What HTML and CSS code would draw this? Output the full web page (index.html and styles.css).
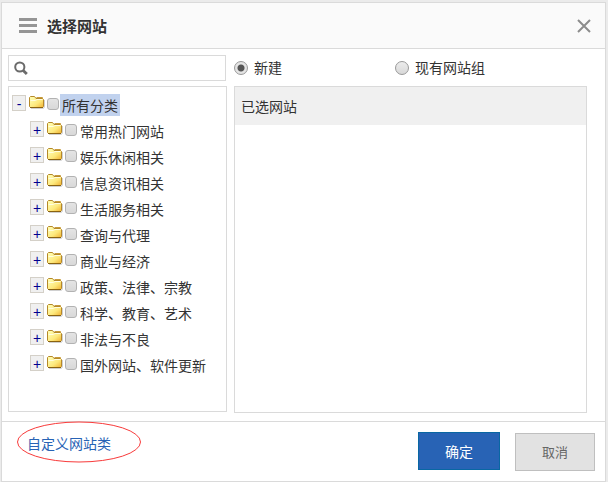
FILE: index.html
```html
<!DOCTYPE html>
<html lang="zh-CN">
<head>
<meta charset="utf-8">
<title>选择网站</title>
<link rel="stylesheet" href="styles.css">
</head>
<body>
<svg class="defs" aria-hidden="true">
  <defs>
    <linearGradient id="folder-fill" x1="0" y1="0" x2="1" y2="1">
      <stop offset="0.2" stop-color="#fffaa8"/>
      <stop offset="0.6" stop-color="#fde87c"/>
      <stop offset="1" stop-color="#f0b030"/>
    </linearGradient>
    <symbol id="folder" viewBox="0 0 16 15">
      <path d="M2 13.500H13.500Q15.500 13.500 15.500 11.500V5" fill="none" stroke="#777" stroke-opacity=".35"/>
      <path d="M.5 11.500V2.500L1.500 1.500H5.500L7 3.500H13.500L14.500 4.500V11.500L13.500 12.500H1.500Z" fill="url(#folder-fill)" stroke="#b5892a"/>
      <path d="M7.500 2.500H13.500V4" fill="none" stroke="#c79a3a"/>
      <path d="M1.500 5.500H6.500L8 4.500H13.500" fill="none" stroke="#fffde0"/>
      <path d="M1 12.500H14" fill="none" stroke="#8a6210"/>
    </symbol>
  </defs>
</svg>
<section class="dialog" role="dialog" aria-labelledby="title">
  <header class="dialog-header">
    <svg class="menu-icon" width="18" height="15" viewBox="0 0 18 15" aria-hidden="true"><path d="M0 0h18v3H0zM0 6h18v3H0zM0 12h18v3H0z" fill="#959595"/></svg>
    <h1 id="title">选择网站</h1>
    <button class="close" type="button" aria-label="关闭"><svg width="14" height="14" viewBox="0 0 14 14"><path d="M1 1l12 12M13 1l-12 12" stroke="#8c8c8c" stroke-width="2"/></svg></button>
  </header>

  <main class="content">
    <div class="source">
      <div class="search">
        <svg width="14" height="14" viewBox="0 0 14 14" aria-hidden="true"><circle cx="5.800" cy="6" r="4.600" fill="none" stroke="#6b6b6b" stroke-width="2"/><path d="M9 9.200l3.800 3.800" stroke="#6b6b6b" stroke-width="2.800"/></svg>
        <input type="text" aria-label="搜索网站">
      </div>
      <ul class="tree">
        <li>
          <div class="node"><button class="toggle" type="button">-</button><svg class="folder"><use href="#folder"/></svg><input type="checkbox" id="all"><label class="selected" for="all">所有分类</label></div>
          <ul>
            <li class="node"><button class="toggle" type="button">+</button><svg class="folder"><use href="#folder"/></svg><input type="checkbox" id="c1"><label for="c1">常用热门网站</label></li>
            <li class="node"><button class="toggle" type="button">+</button><svg class="folder"><use href="#folder"/></svg><input type="checkbox" id="c2"><label for="c2">娱乐休闲相关</label></li>
            <li class="node"><button class="toggle" type="button">+</button><svg class="folder"><use href="#folder"/></svg><input type="checkbox" id="c3"><label for="c3">信息资讯相关</label></li>
            <li class="node"><button class="toggle" type="button">+</button><svg class="folder"><use href="#folder"/></svg><input type="checkbox" id="c4"><label for="c4">生活服务相关</label></li>
            <li class="node"><button class="toggle" type="button">+</button><svg class="folder"><use href="#folder"/></svg><input type="checkbox" id="c5"><label for="c5">查询与代理</label></li>
            <li class="node"><button class="toggle" type="button">+</button><svg class="folder"><use href="#folder"/></svg><input type="checkbox" id="c6"><label for="c6">商业与经济</label></li>
            <li class="node"><button class="toggle" type="button">+</button><svg class="folder"><use href="#folder"/></svg><input type="checkbox" id="c7"><label for="c7">政策、法律、宗教</label></li>
            <li class="node"><button class="toggle" type="button">+</button><svg class="folder"><use href="#folder"/></svg><input type="checkbox" id="c8"><label for="c8">科学、教育、艺术</label></li>
            <li class="node"><button class="toggle" type="button">+</button><svg class="folder"><use href="#folder"/></svg><input type="checkbox" id="c9"><label for="c9">非法与不良</label></li>
            <li class="node"><button class="toggle" type="button">+</button><svg class="folder"><use href="#folder"/></svg><input type="checkbox" id="c10"><label for="c10">国外网站、软件更新</label></li>
          </ul>
        </li>
      </ul>
    </div>
    <div class="target">
      <div class="modes">
        <div class="mode"><input type="radio" name="mode" id="new" checked><label for="new">新建</label></div>
        <div class="mode"><input type="radio" name="mode" id="existing"><label for="existing">现有网站组</label></div>
      </div>
      <section class="chosen"><h2>已选网站</h2></section>
    </div>
  </main>

  <footer class="dialog-footer">
    <a class="custom" href="#">自定义网站类<svg class="ring" width="124" height="42" viewBox="0 0 124 42" aria-hidden="true"><ellipse cx="62" cy="21" rx="61.500" ry="20" fill="none" stroke="#f83a3a"/></svg></a>
    <div class="actions">
      <button class="confirm" type="button">确定</button>
      <button class="cancel" type="button">取消</button>
    </div>
  </footer>
</section>
</body>
</html>
```
FILE: styles.css
```css
* { box-sizing: border-box; }

body {
  margin: 0;
  min-height: 100vh;
  padding: 2px 2px 0 1px;
  display: flex;
  background: #ebebeb;
  color: #333;
  font: 14px/22px "Noto Sans CJK SC", sans-serif;
}

button, input { margin: 0; padding: 0; font: inherit; }
ul { margin: 0; padding: 0; list-style: none; }
svg { display: block; flex: none; }
.defs { position: absolute; width: 0; height: 0; }

.dialog {
  flex: 1;
  display: flex;
  flex-direction: column;
  border: 1px solid #dadada;
  background: #fff;
}

.dialog-header {
  display: flex;
  align-items: center;
  padding: 11px 14px 11px 17px;
  border-bottom: 1px solid #dadada;
  background: #fafafa;
}
.dialog-header h1 {
  flex: 1;
  margin: 0 0 0 10px;
  font-size: 15px;
  line-height: 23px;
  font-weight: 700;
}
.close { border: 0; background: none; }

.content {
  flex: 1;
  display: flex;
  gap: 7px;
  padding: 6px 18px 8px 6px;
}
.source {
  flex: 0 0 219px;
  display: flex;
  flex-direction: column;
  gap: 5px;
}
.target {
  flex: 1;
  display: flex;
  flex-direction: column;
  gap: 5px;
}

.search {
  display: flex;
  align-items: center;
  height: 26px;
  margin-right: 1px;
  padding: 0 5px;
  border: 1px solid #dadada;
}
.search input {
  flex: 1;
  min-width: 0;
  border: 0;
  outline: 0;
  background: none;
}

.tree {
  flex: 1;
  margin-bottom: 1px;
  padding: 5px 3px;
  border: 1px solid #dadada;
}
.tree ul { padding-left: 18px; }
.node { display: flex; align-items: flex-start; height: 26px; }
.toggle {
  width: 14px;
  height: 16px;
  margin: 3px 3px 0 0;
  border: 1px solid #d4d0c8;
  background: #f0f0f0;
  color: #000090;
  font: 14px/16px "Liberation Sans", sans-serif;
}
.folder { width: 16px; height: 15px; margin: 3px 2px 0 0; }
.node input {
  appearance: none;
  width: 12px;
  height: 12px;
  margin: 6px 1px 0 0;
  border: 1px solid #b2b2b2;
  border-radius: 3px;
  background: linear-gradient(#e4e4e4, #d8d8d8);
}
.node label { margin-top: 2px; padding: 0 2px; white-space: nowrap; }
.node .selected { background: #c1d2ee; }

.modes {
  display: grid;
  grid-template-columns: 161px 1fr;
  height: 26px;
}
.mode { display: flex; align-items: center; gap: 6px; }
.mode label { line-height: 20px; padding-bottom: 2px; }
.mode input {
  appearance: none;
  width: 14px;
  height: 14px;
  border: 1px solid #999;
  border-radius: 50%;
  background: linear-gradient(#ececec, #d8d8d8);
}
.mode input:checked {
  background: radial-gradient(circle, #555 3px, #e4e4e4 4px);
}

.chosen { flex: 1; border: 1px solid #dadada; }
.chosen h2 {
  margin: 0;
  padding: 8px 6px;
  background: #f0f0f0;
  font-size: 14px;
  font-weight: 400;
}

.dialog-footer {
  display: flex;
  align-items: center;
  justify-content: space-between;
  padding: 10px 10px 10px 25px;
  border-top: 1px solid #dadada;
}
.custom {
  position: relative;
  align-self: flex-start;
  color: #2863b5;
  text-decoration: none;
}
.ring { position: absolute; left: -10px; top: -11px; }
.actions { display: flex; align-items: flex-end; gap: 15px; }
.actions button { height: 38px; }
.confirm {
  width: 82px;
  margin-bottom: 1px;
  border: 1px solid #0967a3;
  background: #2863b5;
  color: #fff;
}
.actions .cancel {
  width: 80px;
  border: 1px solid #bfbfbf;
  background: #e2e2e2;
  color: #666;
  font-size: 13px;
}
```
